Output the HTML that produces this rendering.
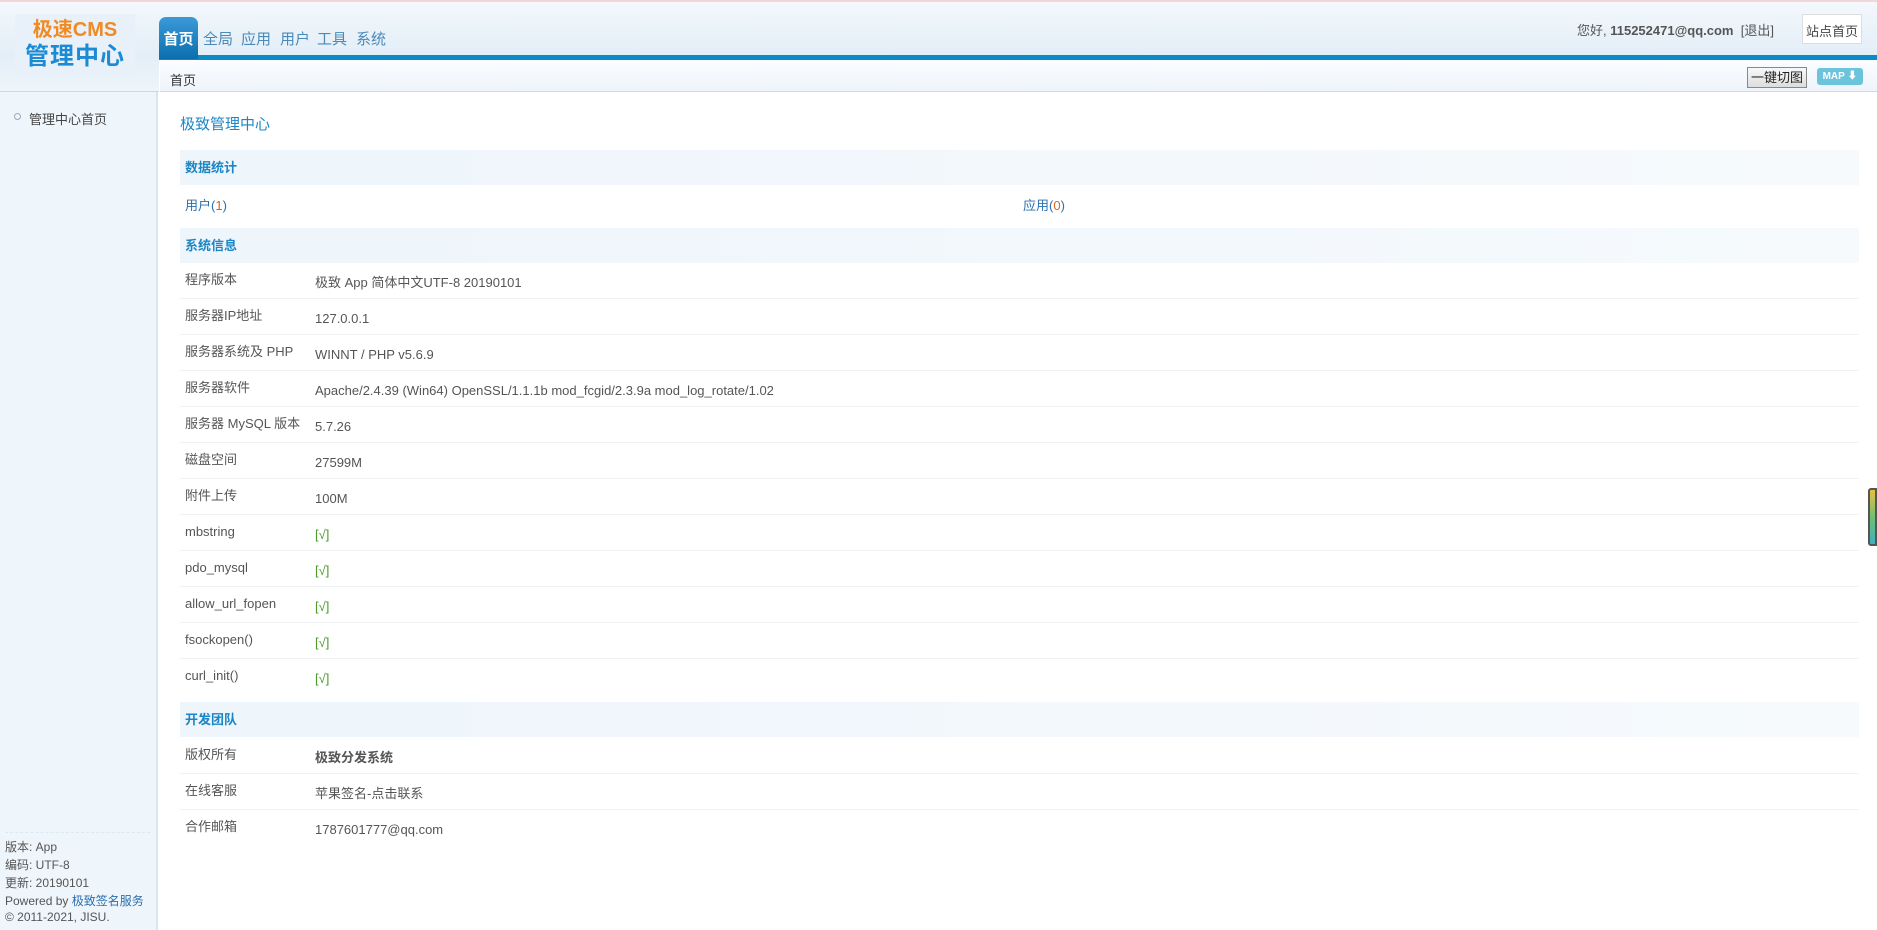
<!DOCTYPE html>
<html><head><meta charset="utf-8"><style>
*{margin:0;padding:0;box-sizing:border-box}
body{width:1877px;height:930px;overflow:hidden;background:#fff;font-family:"Liberation Sans","Noto Sans CJK SC",sans-serif;font-size:13px;color:#555;position:relative}
.abs{position:absolute}
#top{left:0;top:0;width:1877px;height:55px;background:linear-gradient(#f3f8fc,#e3eef7);border-top:2px solid #f3d6d6}
#lefthd{left:0;top:55px;width:159px;height:37px;background:linear-gradient(#e3eef7,#eef5fb);border-bottom:1px solid #c9d9e6}
#logo{left:15px;top:14px;width:120px;height:62px;background:#e8f1f9;text-align:center;font-weight:bold;z-index:2}
#logo .a{color:#f08a24;font-size:20px;line-height:24px;margin-top:4px}
#logo .b{color:#1d8ad4;font-size:24px;line-height:30px;letter-spacing:1px}
#stripe{left:159px;top:55px;width:1718px;height:5px;background:#0b8ac8}
#tab{left:159px;top:17px;width:39px;height:42px;border-radius:7px 7px 0 0;background:linear-gradient(#3b9ad6,#0b6fae);color:#fff;font-size:15px;font-weight:bold;text-align:center;padding-top:11px}
.tb{top:28px;font-size:15px;color:#4a8ab8}
#side{left:0;top:92px;width:158px;height:838px;background:#eef5fb;border-right:2px solid #d6e6f3}
#crumb{left:160px;top:60px;width:1717px;height:32px;background:linear-gradient(#fbfdff,#eef4fa);border-bottom:1px solid #c9d9e6}
.hd{left:180px;width:1679px;height:35px;background:linear-gradient(90deg,#eef5fb,#f6fafd);color:#1b86c6;font-weight:bold;font-size:13px;padding:10px 5px;line-height:16px}
.row{left:180px;width:1679px;height:36px;border-bottom:1px solid #f0f3f5;font-size:13px;color:#555}
.row .l{position:absolute;left:5px;top:9px;line-height:16px}
.row .v{position:absolute;left:135px;top:12px;line-height:16px}
.ok{color:#4a9a2a}
.sb{left:5px;font-size:12px;color:#555}
</style></head><body>
<div id="top" class="abs"></div>
<div id="lefthd" class="abs"></div>
<div id="logo" class="abs"><div class="a">极速CMS</div><div class="b">管理中心</div></div>
<div id="stripe" class="abs"></div>
<div id="tab" class="abs">首页</div>
<div class="abs tb" style="left:203px">全局</div>
<div class="abs tb" style="left:241px">应用</div>
<div class="abs tb" style="left:280px">用户</div>
<div class="abs tb" style="left:317px">工具</div>
<div class="abs tb" style="left:356px">系统</div>
<div class="abs" style="left:1577px;top:20px;font-size:13px;color:#555">您好, <b>115252471@qq.com</b> &nbsp;[退出]</div>
<div class="abs" style="left:1802px;top:14px;width:60px;height:30px;background:#fff;border:1px solid #ddd;font-size:13px;padding-top:6px;text-align:center;color:#444">站点首页</div>
<div id="side" class="abs"></div>
<div class="abs" style="left:14px;top:113px;width:7px;height:7px;border:1px solid #9ab;border-radius:50%"></div>
<div class="abs" style="left:29px;top:109px;font-size:13px;color:#444">管理中心首页</div>
<div class="abs" style="left:5px;top:832px;width:145px;border-top:1px dashed #dde8f0"></div>
<div class="abs sb" style="top:838px">版本: App</div>
<div class="abs sb" style="top:856px">编码: UTF-8</div>
<div class="abs sb" style="top:874px">更新: 20190101</div>
<div class="abs sb" style="top:892px">Powered by <span style="color:#2a6fb0">极致签名服务</span></div>
<div class="abs sb" style="top:910px">© 2011-2021, JISU.</div>
<div id="crumb" class="abs"></div>
<div class="abs" style="left:170px;top:70px;font-size:13px;color:#333">首页</div>
<div class="abs" style="left:1747px;top:67px;width:60px;height:21px;background:linear-gradient(#f8f8f8,#ddd);border:1px solid #888;font-size:13px;text-align:center;line-height:19px;color:#222">一键切图</div>
<div class="abs" style="left:1817px;top:68px;width:46px;height:17px;background:#6cc3dc;border-radius:3px;color:#fff;font-size:10px;font-weight:bold;text-align:center;line-height:17px">MAP ⬇</div>
<div class="abs" style="left:180px;top:113px;font-size:15px;color:#1b86c6">极致管理中心</div>
<div class="abs hd" style="top:150px">数据统计</div>
<div class="abs" style="left:185px;top:195px;font-size:13px;color:#2a6fb0">用户(<span style="color:#e06020">1</span>)</div>
<div class="abs" style="left:1023px;top:195px;font-size:13px;color:#2a6fb0">应用(<span style="color:#e06020">0</span>)</div>
<div class="abs hd" style="top:228px">系统信息</div>
<div class="abs row" style="top:263px"><span class="l">程序版本</span><span class="v">极致 App 简体中文UTF-8 20190101</span></div>
<div class="abs row" style="top:299px"><span class="l">服务器IP地址</span><span class="v">127.0.0.1</span></div>
<div class="abs row" style="top:335px"><span class="l">服务器系统及 PHP</span><span class="v">WINNT / PHP v5.6.9</span></div>
<div class="abs row" style="top:371px"><span class="l">服务器软件</span><span class="v">Apache/2.4.39 (Win64) OpenSSL/1.1.1b mod_fcgid/2.3.9a mod_log_rotate/1.02</span></div>
<div class="abs row" style="top:407px"><span class="l">服务器 MySQL 版本</span><span class="v">5.7.26</span></div>
<div class="abs row" style="top:443px"><span class="l">磁盘空间</span><span class="v">27599M</span></div>
<div class="abs row" style="top:479px"><span class="l">附件上传</span><span class="v">100M</span></div>
<div class="abs row" style="top:515px"><span class="l">mbstring</span><span class="v ok">[√]</span></div>
<div class="abs row" style="top:551px"><span class="l">pdo_mysql</span><span class="v ok">[√]</span></div>
<div class="abs row" style="top:587px"><span class="l">allow_url_fopen</span><span class="v ok">[√]</span></div>
<div class="abs row" style="top:623px"><span class="l">fsockopen()</span><span class="v ok">[√]</span></div>
<div class="abs row" style="top:659px;border:0"><span class="l">curl_init()</span><span class="v ok">[√]</span></div>
<div class="abs hd" style="top:702px">开发团队</div>
<div class="abs row" style="top:738px"><span class="l">版权所有</span><span class="v" style="font-weight:bold">极致分发系统</span></div>
<div class="abs row" style="top:774px"><span class="l">在线客服</span><span class="v">苹果签名-点击联系</span></div>
<div class="abs row" style="top:810px;border:0"><span class="l">合作邮箱</span><span class="v">1787601777@qq.com</span></div>
<div class="abs" style="left:1868px;top:488px;width:9px;height:58px;background:linear-gradient(#e8c040,#70c070,#40b0c0);border:2px solid #555;border-radius:3px 0 0 3px"></div>
</body></html>
